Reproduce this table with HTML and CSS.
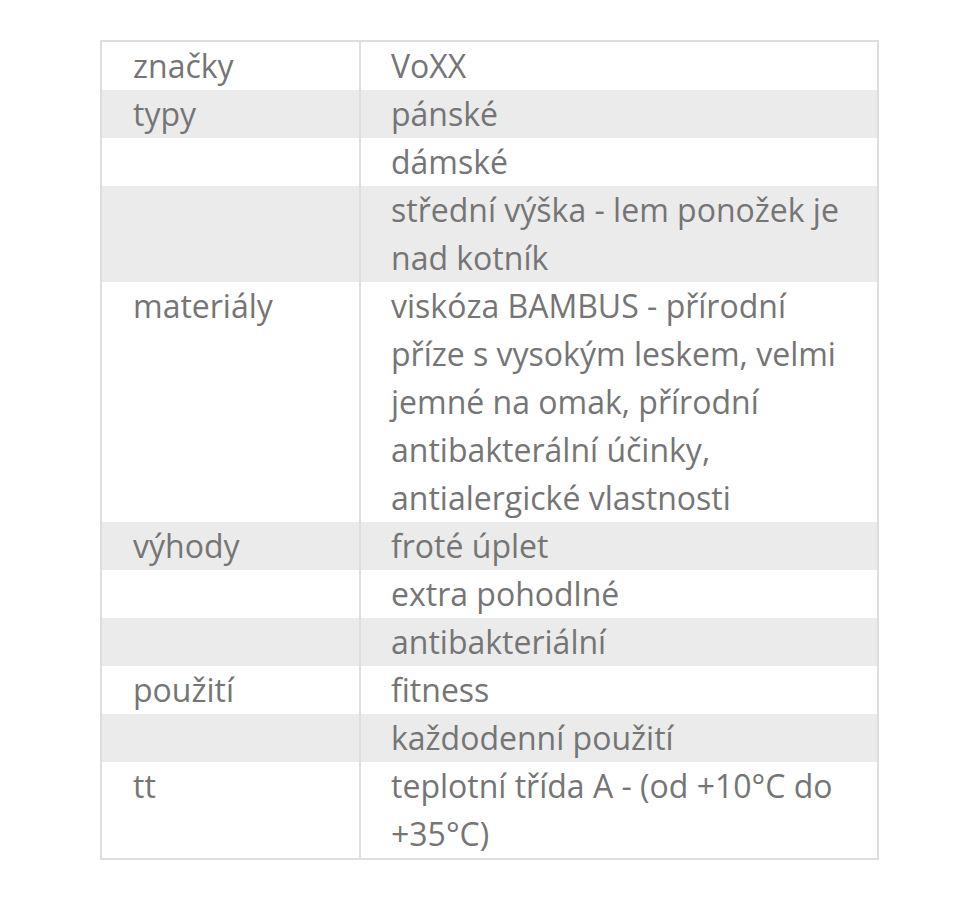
FILE: index.html
```html
<!DOCTYPE html>
<html lang="cs">
<head>
<meta charset="utf-8">
<link rel="stylesheet" href="styles.css">
</head>
<body>
<div class="page">
<table class="params">
<tbody>
<tr><td class="k">značky</td><td class="v">VoXX</td></tr>
<tr><td class="k">typy</td><td class="v">pánské</td></tr>
<tr><td class="k"></td><td class="v">dámské</td></tr>
<tr><td class="k"></td><td class="v">střední výška - lem ponožek je nad kotník</td></tr>
<tr><td class="k">materiály</td><td class="v">viskóza BAMBUS - přírodní příze s vysokým leskem, velmi jemné na omak, přírodní antibakterální účinky, antialergické vlastnosti</td></tr>
<tr><td class="k">výhody</td><td class="v">froté úplet</td></tr>
<tr><td class="k"></td><td class="v">extra pohodlné</td></tr>
<tr><td class="k"></td><td class="v">antibakteriální</td></tr>
<tr><td class="k">použití</td><td class="v">fitness</td></tr>
<tr><td class="k"></td><td class="v">každodenní použití</td></tr>
<tr><td class="k">tt</td><td class="v">teplotní třída A - (od +10°C do +35°C)</td></tr>
</tbody>
</table>
</div>
</body>
</html>
```
FILE: styles.css
```css
html, body {
  margin: 0;
  padding: 0;
  background: #ffffff;
}
.page {
  padding: 40px 77px 0 100px;
}
.params {
  width: 779px;
  border-collapse: collapse;
  border: 2px solid #dedede;
  font-family: "Open Sans", "Noto Sans", sans-serif;
  font-size: 32px;
  font-weight: 400;
  line-height: 48px;
  color: #757575;
}
.params tr:nth-child(even) {
  background: #ebebeb;
}
.params td {
  padding: 0 30px;
  vertical-align: top;
}
.params td.k {
  width: 196px;
  padding-left: 31px;
  border-right: 2px solid #dedede;
}
```
